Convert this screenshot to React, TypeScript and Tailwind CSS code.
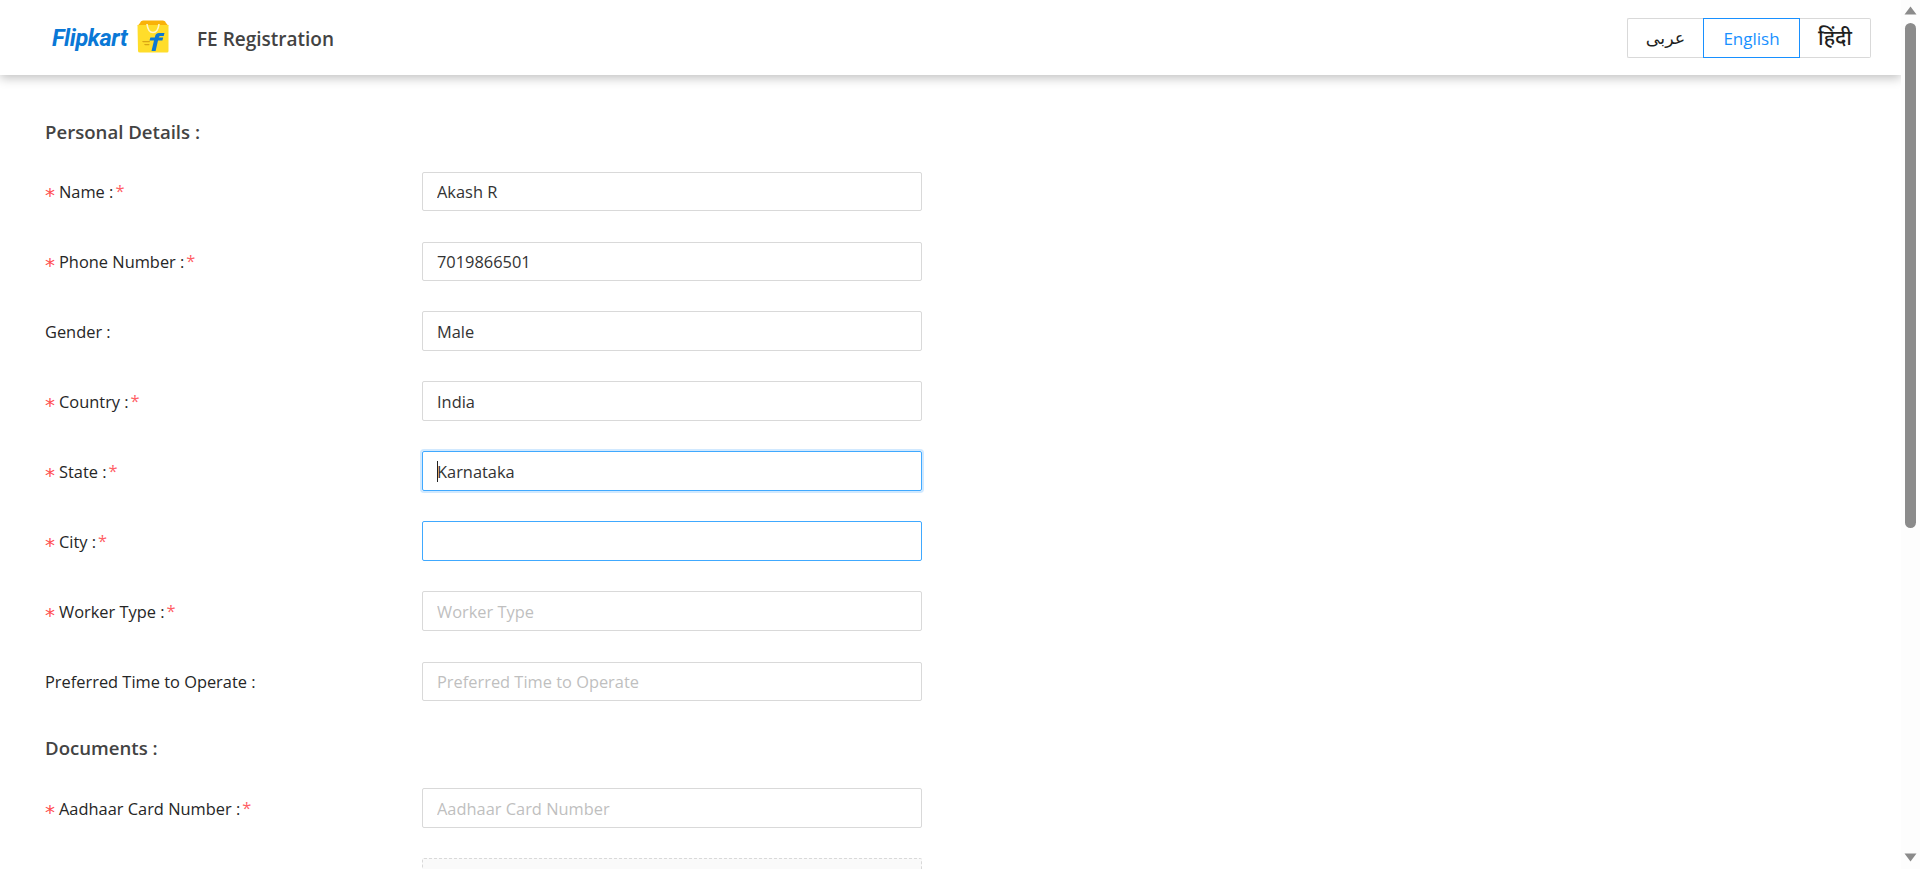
import React from 'react';

const font = { fontFamily: '"Open Sans", "Noto Sans", "DejaVu Sans", sans-serif' };

type Field = {
  label: string;
  value?: string;
  placeholder?: string;
  required?: boolean;
  state?: 'focused' | 'hover';
  size?: string;
};

const personal: Field[] = [
  { label: 'Name :', value: 'Akash R', required: true, size: 'h-[39px] mb-[31px]' },
  { label: 'Phone Number :', value: '7019866501', required: true, size: 'h-[39px] mb-[30px]' },
  { label: 'Gender :', value: 'Male' },
  { label: 'Country :', value: 'India', required: true },
  { label: 'State :', value: 'Karnataka', required: true, state: 'focused' },
  { label: 'City :', value: '', required: true, state: 'hover' },
  { label: 'Worker Type :', placeholder: 'Worker Type', required: true, size: 'h-10 mb-[31px]' },
  { label: 'Preferred Time to Operate :', placeholder: 'Preferred Time to Operate', size: 'h-[39px] mb-[32px]' },
];

function FlipkartBag() {
  return (
    <svg width="32" height="33" viewBox="0 0 32 33" className="mb-[2px]">
      <path d="M3 3 Q3.5 0.5 6 0.5 H26 Q28.5 0.5 29 3 L31.5 6 H0.5 Z" fill="#f9b209" />
      <path d="M0.5 5 H31.5 V31 Q31.5 32.5 30 32.5 H3 Q1 32.5 1 31 Z" fill="#ffdd2b" />
      <path d="M10 4 Q11 12.5 16 12.5 Q21 12.5 22 4" fill="none" stroke="#fff6c9" strokeWidth="1.6" />
      <path
        d="M14.5 31 L17 20.5 H12.5 L13.4 17.5 H17.8 L18.3 15.6 Q19 13 22 13 H27.5 L26.7 16 H23.2 Q22 16 21.7 17.5 H26.2 L25.4 20.5 H21 L18.6 31 Z"
        fill="#0c77d2"
      />
      <path d="M5 21 H13 L12.6 22.2 H6 Z M7 24 H12.5 L12.1 25.2 H8 Z" fill="#d9a514" />
    </svg>
  );
}

function FormRow({ field }: { field: Field }) {
  const border =
    field.state === 'focused'
      ? 'border-[#40a9ff] shadow-[0_0_0_2px_rgba(24,144,255,0.2)]'
      : field.state === 'hover'
        ? 'border-[#40a9ff]'
        : 'border-[#d9d9d9]';

  return (
    <div className={`flex items-center ${field.size ?? 'h-10 mb-[30px]'}`}>
      <div className="w-[377px] pt-[2px] flex items-center text-[16.4px] text-[#262626] whitespace-nowrap">
        {field.required && (
          <span
            className="text-[#ff4d4f] w-[14px] text-[20px] leading-none relative top-[3px]"
            style={{ fontFamily: '"DejaVu Sans", sans-serif' }}
          >
            *
          </span>
        )}
        <span>{field.label}</span>
        {field.required && <span className="text-[#ff6065] ml-[2px] relative -top-[1px]">*</span>}
      </div>
      <div className="relative w-[500px] h-full">
        <input
          readOnly
          value={field.value ?? ''}
          placeholder={field.placeholder}
          style={font}
          className={`w-full h-full border rounded-[2px] px-[14px] text-[16.4px] text-[#333] placeholder:text-[#bfbfbf] outline-none ${border}`}
        />
        {field.state === 'focused' && <div className="absolute left-[15px] top-[10px] w-[1px] h-[21px] bg-[#222]" />}
      </div>
    </div>
  );
}

export default function App() {
  return (
    <div className="flex h-screen overflow-hidden bg-white" style={font}>
      <div className="flex-1 min-w-0 flex flex-col">
        <header className="h-[75px] shrink-0 flex items-center justify-between pl-[52px] pr-[30px] bg-white shadow-[0_3px_10px_rgba(0,0,0,0.25)]">
          <div className="flex items-center">
            <span
              className="text-[23.5px] font-bold italic text-[#0a78d6] tracking-[-0.4px] w-[85px] pt-[2px]"
              style={{ fontFamily: 'Roboto, sans-serif' }}
            >
              Flipkart
            </span>
            <FlipkartBag />
            <span className="ml-[28px] pt-[3px] text-[19px] font-semibold text-[#434343]">FE Registration</span>
          </div>
          <div className="flex h-10 text-[17px]">
            <button
              className="w-[76px] border border-[#d9d9d9] border-r-0 rounded-l-[2px] text-[#1f1f1f] text-[17.5px] pt-[2px]"
              style={{ fontFamily: '"DejaVu Sans", sans-serif' }}
            >
              عربى
            </button>
            <button className="w-[97px] border border-[#1890ff] text-[#1890ff] font-medium pt-[2px]">English</button>
            <button className="w-[71px] border border-[#d9d9d9] border-l-0 rounded-r-[2px] text-[#1f1f1f] text-[21px] font-medium">
              हिंदी
            </button>
          </div>
        </header>

        <main className="flex-1 pl-[45px] pt-[42px]">
          <h2 className="h-[30px] mb-[25px] flex items-center text-[18.6px] font-semibold text-[#434343]">Personal Details :</h2>
          {personal.map((f) => (
            <FormRow key={f.label} field={f} />
          ))}
          <h2 className="h-[30px] mb-[25px] flex items-center text-[18.6px] font-semibold text-[#434343]">Documents :</h2>
          <FormRow field={{ label: 'Aadhaar Card Number :', placeholder: 'Aadhaar Card Number', required: true }} />
          <div className="ml-[377px] w-[500px] h-[120px] border border-dashed border-[#d9d9d9] rounded-[2px] bg-[#fafafa]" />
        </main>
      </div>

      <aside className="w-[19px] shrink-0 bg-[#fdfdfd] flex flex-col items-center justify-between relative">
        <svg width="13" height="9" viewBox="0 0 13 9" className="mt-[6px]">
          <path d="M6.5 0.5 L12.5 8.5 H0.5 Z" fill="#8b8b8b" />
        </svg>
        <div className="absolute top-[23px] left-[4px] w-[11px] h-[505px] rounded-full bg-[#8b8b8b]" />
        <svg width="13" height="9" viewBox="0 0 13 9" className="mb-[7px]">
          <path d="M6.5 8.5 L12.5 0.5 H0.5 Z" fill="#8b8b8b" />
        </svg>
      </aside>
    </div>
  );
}
